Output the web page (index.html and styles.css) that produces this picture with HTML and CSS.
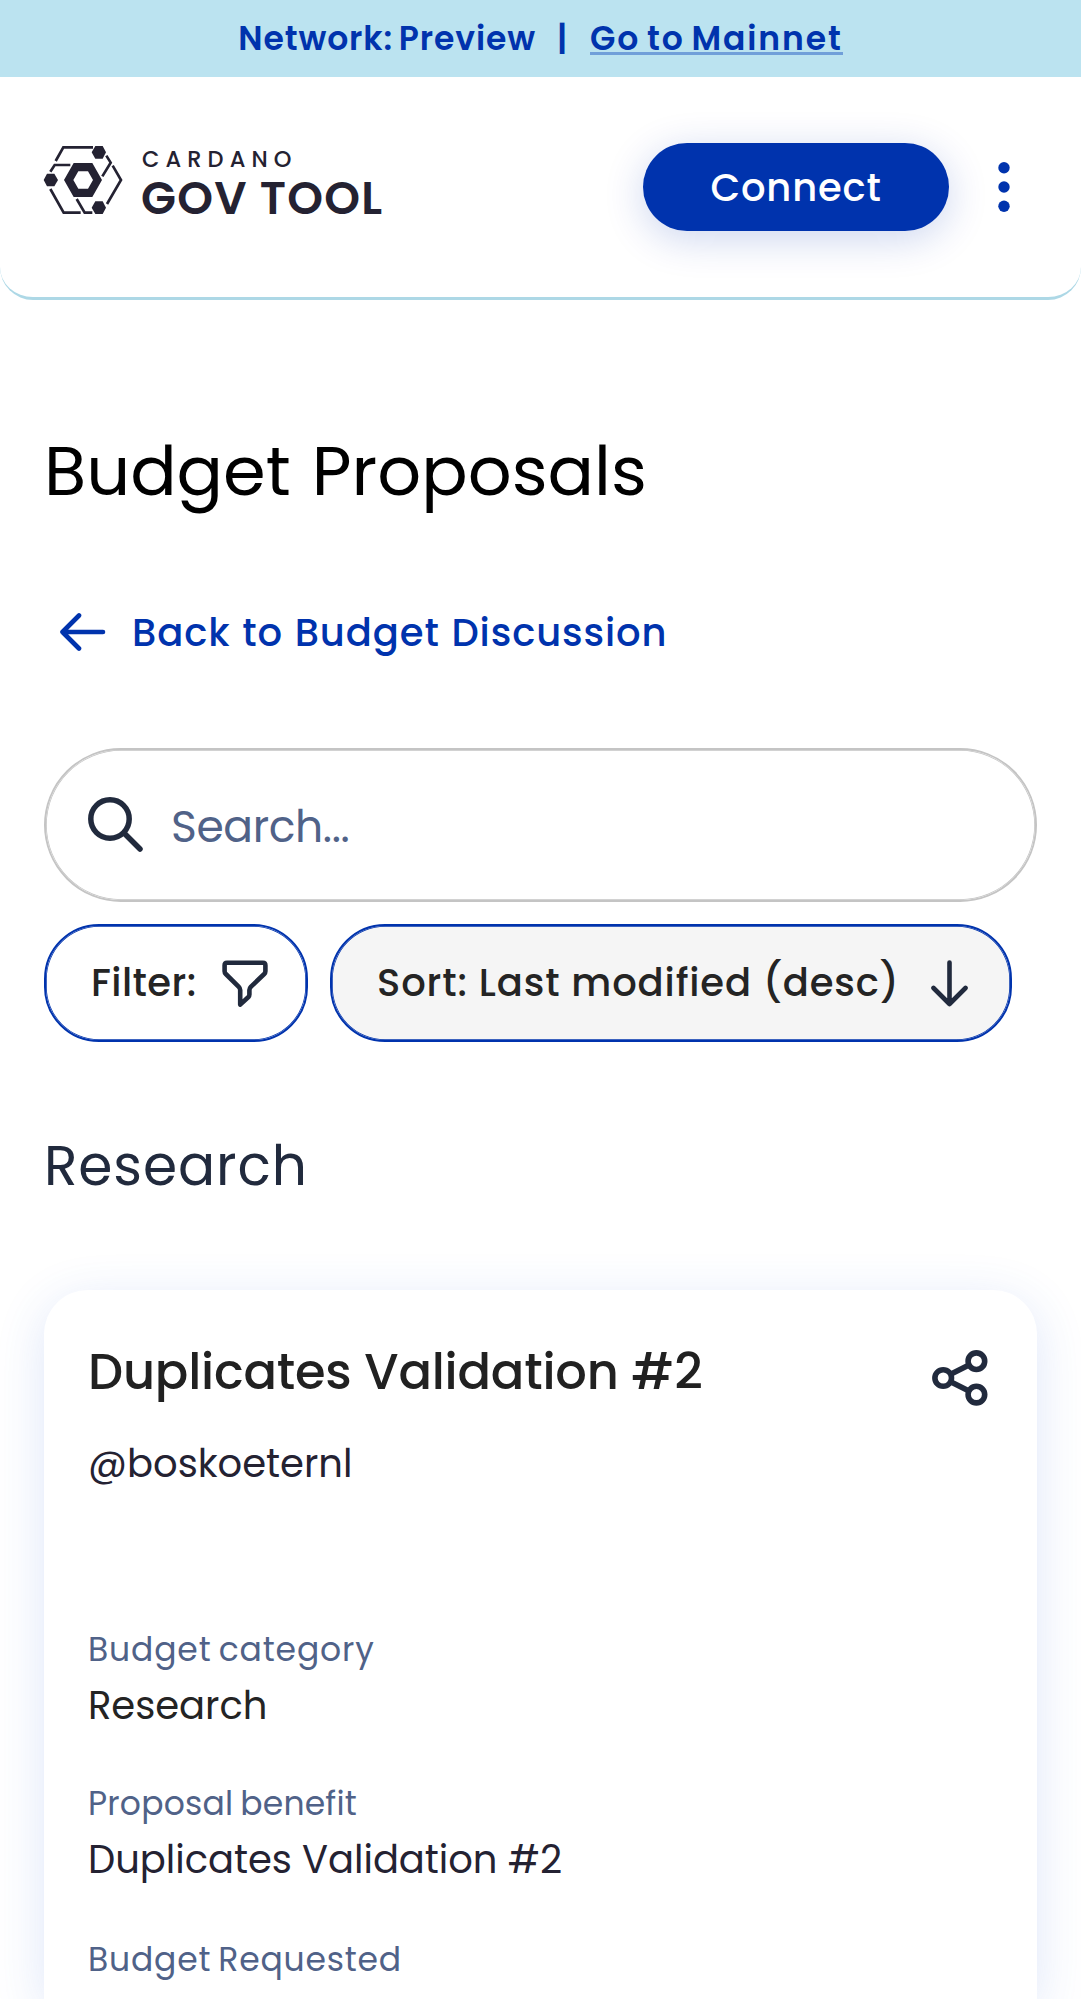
FILE: index.html
```html
<!DOCTYPE html>
<html lang="en">
<head>
<meta charset="utf-8">
<title>Budget Proposals</title>
<link rel="stylesheet" href="styles.css">
</head>
<body>
<div class="banner">
  <span class="banner-network">Network: Preview</span>
  <span class="banner-divider">|</span>
  <a class="banner-link" href="#">Go to Mainnet</a>
</div>

<header class="header">
  <a class="logo" href="#">
    <svg class="logo-mark" viewBox="40 45 240 210" aria-hidden="true">
      <g fill="none" stroke="#242232" stroke-width="8">
        <path d="M190 52H101L78 93"/>
        <path d="M122 105H75L62 125"/>
        <path d="M230 77L243 98L218 139"/>
        <path d="M249 107L274 150L232 222"/>
        <path d="M62 177L102 248H153"/>
        <path d="M141 207L165 248H188"/>
      </g>
      <g fill="#242232">
        <path d="M42 150L52 131H74L85 150L74 169H52Z"/>
        <path d="M186 67L197 48H219L229 67L219 86H197Z"/>
        <path d="M186 233L197 214H219L229 233L219 252H197Z"/>
        <path fill-rule="evenodd" d="M103 150L132 99H188L217 150L188 201H132ZM131 150L146 176H175L190 150L175 124H146Z"/>
      </g>
    </svg>
    <span class="logo-text">
      <span class="logo-top">CARDANO</span>
      <span class="logo-name">GOV TOOL</span>
    </span>
  </a>
  <button class="connect" type="button">Connect</button>
  <button class="menu" type="button" aria-label="Menu">
    <svg class="menu-dots" viewBox="0 0 12 52" fill="#0033ad">
      <circle cx="6" cy="6.7" r="5.7"/><circle cx="6" cy="26" r="5.7"/><circle cx="6" cy="45.3" r="5.7"/>
    </svg>
  </button>
</header>

<main class="content">
  <h1 class="page-title">Budget Proposals</h1>

  <a class="back" href="#">
    <svg class="back-icon" viewBox="0 0 46 38" fill="none" stroke="#0033ad" stroke-width="4.6" stroke-linecap="round" stroke-linejoin="round">
      <path d="M43 19H2.5M19 2.5L2.5 19L19 35.5"/>
    </svg>
    <span class="back-text">Back to Budget Discussion</span>
  </a>

  <div class="search">
    <svg class="search-icon" viewBox="0 0 56 56" fill="none" stroke="#212a3d" stroke-width="5.5" stroke-linecap="round">
      <circle cx="22" cy="22" r="19.2"/><path d="M36 36L52 52"/>
    </svg>
    <span class="search-placeholder">Search...</span>
  </div>

  <div class="chips">
    <button class="chip chip-filter" type="button">
      <span>Filter:</span>
      <svg class="filter-icon" viewBox="0 0 46 47" fill="none" stroke="#212a3d" stroke-width="4.6" stroke-linejoin="round">
        <path d="M5 2.8H41Q43.4 2.8 43.4 5.2V11.2Q43.4 12.8 42.2 14L28.8 26.8Q27.4 28.2 27.4 30V34.6Q27.4 36 26.4 37L18.2 44.6V30Q18.2 28.2 16.8 26.8L3.8 14Q2.6 12.8 2.6 11.2V5.2Q2.6 2.8 5 2.8Z"/>
      </svg>
    </button>
    <button class="chip chip-sort" type="button">
      <span>Sort: Last modified (desc)</span>
      <svg class="sort-icon" viewBox="0 0 37 47" fill="none" stroke="#212a3d" stroke-width="4.6" stroke-linecap="round" stroke-linejoin="round">
        <path d="M18.5 2.5V44M2.5 28L18.5 44L34.5 28"/>
      </svg>
    </button>
  </div>

  <h2 class="section-title">Research</h2>

  <article class="card">
    <div class="card-head">
      <h3 class="card-title">Duplicates Validation #2</h3>
      <svg class="share-icon" viewBox="0 0 56 56" fill="none" stroke="#212a3d" stroke-width="5.6">
        <circle cx="11.2" cy="28" r="8.3"/><circle cx="44.4" cy="11.2" r="8.3"/><circle cx="44.4" cy="44.6" r="8.3"/>
        <path d="M18.6 24.2L37 15M18.6 31.8L37 41"/>
      </svg>
    </div>
    <p class="author">@boskoeternl</p>
    <dl class="facts">
      <dt class="label label-category">Budget category</dt>
      <dd class="value value-category">Research</dd>
      <dt class="label label-benefit">Proposal benefit</dt>
      <dd class="value">Duplicates Validation #2</dd>
      <dt class="label label-requested">Budget Requested</dt>
    </dl>
  </article>
</main>
</body>
</html>
```
FILE: styles.css
```css
* { box-sizing: border-box; }

body {
  margin: 0;
  height: 1999px;
  overflow: hidden;
  background: #fff;
  color: #242232;
  font-family: Poppins, Inter, sans-serif;
  white-space: nowrap;
}

h1, h2, h3, p, dl, dt, dd { margin: 0; }
a { color: inherit; text-decoration: none; }
button { padding: 0; border: 0; background: none; font-family: inherit; }
svg { display: block; flex: none; }

/* Network banner */
.banner {
  display: flex;
  justify-content: center;
  height: 77px;
  background: #bbe3f0;
  color: #0033ad;
  font-size: 33px;
  font-weight: 600;
  line-height: 77px;
}
.banner-network { letter-spacing: .9px; word-spacing: -3px; }
.banner-divider { width: 54px; text-align: center; text-indent: -2px; }
.banner-link {
  align-self: flex-start;
  height: 55px;
  border-bottom: 3px solid #709fd9;
  letter-spacing: 1.9px;
  word-spacing: -3px;
}

/* Header */
.header {
  display: flex;
  align-items: flex-start;
  height: 223px;
  padding: 66px 71px 0 43px;
  border-bottom: 3px solid #add8e6;
  border-radius: 0 0 33px 33px;
}
.logo { display: flex; margin-right: auto; padding-top: 2px; }
.logo-mark { width: 80px; height: 70px; }
.logo-text { display: flex; flex-direction: column; padding: 0 0 0 18px; }
.logo-top {
  padding-left: 1px;
  font-size: 22.5px;
  font-weight: 500;
  line-height: 28px;
  letter-spacing: 6.1px;
}
.logo-name {
  font-size: 45.5px;
  font-weight: 600;
  line-height: 50px;
  letter-spacing: 1.24px;
}
.connect {
  width: 306px;
  height: 88px;
  padding-top: 2px;
  border-radius: 44px;
  background: #0033ad;
  box-shadow: 0 8px 40px rgba(0, 51, 173, .2);
  color: #fff;
  font-size: 38.5px;
  font-weight: 500;
  line-height: 86px;
  letter-spacing: .81px;
}
.menu { display: flex; align-items: center; height: 88px; margin-left: 49px; }
.menu-dots { width: 12px; height: 52px; }

/* Page content */
.content { padding: 131px 44px 0; }
.page-title {
  color: #000;
  font-size: 68.75px;
  font-weight: 400;
  line-height: 80px;
  word-spacing: 2.7px;
}
.back {
  display: flex;
  align-items: center;
  height: 44px;
  margin-top: 99px;
  padding-left: 16px;
  color: #0033ad;
  font-size: 38.5px;
  font-weight: 500;
  line-height: 44px;
  letter-spacing: .9px;
  word-spacing: .9px;
}
.back-icon { width: 46px; height: 38px; margin-right: 26px; }
.back-text { padding-top: 2px; }

.search {
  display: flex;
  align-items: center;
  height: 154px;
  margin-top: 94px;
  padding-left: 42px;
  border: 2px solid #c4c4c4;
  border-radius: 77px;
  box-shadow: inset 0 0 0 .75px #c4c4c4;
}
.search-icon { width: 56px; height: 56px; }
.search-placeholder {
  padding: 4px 0 0 27px;
  color: #506288;
  font-size: 44px;
  line-height: 52px;
  letter-spacing: -.39px;
}

.chips { display: flex; gap: 22px; margin-top: 22px; }
.chip {
  display: flex;
  align-items: center;
  height: 118px;
  border: 2px solid #0033ad;
  border-radius: 55px;
  box-shadow: inset 0 0 0 .75px #0033ad;
  color: #242424;
  font-size: 38.5px;
  font-weight: 500;
  line-height: 44px;
}
.chip span { padding-bottom: 1px; }
.chip-filter { width: 264px; padding-left: 45px; letter-spacing: .46px; }
.filter-icon { width: 46px; height: 47px; margin-left: auto; margin-right: 38px; }
.chip-sort { width: 682px; padding-left: 45px; background: #f5f5f5; letter-spacing: .89px; }
.sort-icon { width: 37px; height: 47px; margin-left: auto; margin-right: 42px; }

.section-title {
  margin-top: 91px;
  color: #212a3d;
  font-size: 55px;
  font-weight: 400;
  line-height: 66px;
  letter-spacing: .9px;
}

/* Proposal card */
.card {
  height: 709px;
  margin-top: 91px;
  padding: 52px 44px 0;
  border-radius: 44px 44px 0 0;
  background: #fff;
  box-shadow: 0 11px 50px rgba(47, 98, 220, .16);
}
.card-head { display: flex; justify-content: space-between; }
.card-title {
  color: #212121;
  font-size: 49.5px;
  font-weight: 500;
  line-height: 60px;
  letter-spacing: -.2px;
}
.share-icon { width: 56px; height: 56px; margin: 8px 5px 0 0; }
.author {
  margin-top: 36px;
  font-size: 38.5px;
  line-height: 44px;
}
.facts { margin-top: 144px; }
.label { color: #506288; font-size: 33px; line-height: 40px; }
.label-category { letter-spacing: .85px; word-spacing: -2.5px; }
.label-benefit { margin-top: 56px; letter-spacing: .2px; word-spacing: -2px; }
.label-requested { margin-top: 58px; letter-spacing: .8px; word-spacing: -2.5px; }
.value {
  margin-top: 14px;
  font-size: 38.5px;
  line-height: 44px;
  letter-spacing: -.04px;
}
.value-category { color: #242424; }
```
